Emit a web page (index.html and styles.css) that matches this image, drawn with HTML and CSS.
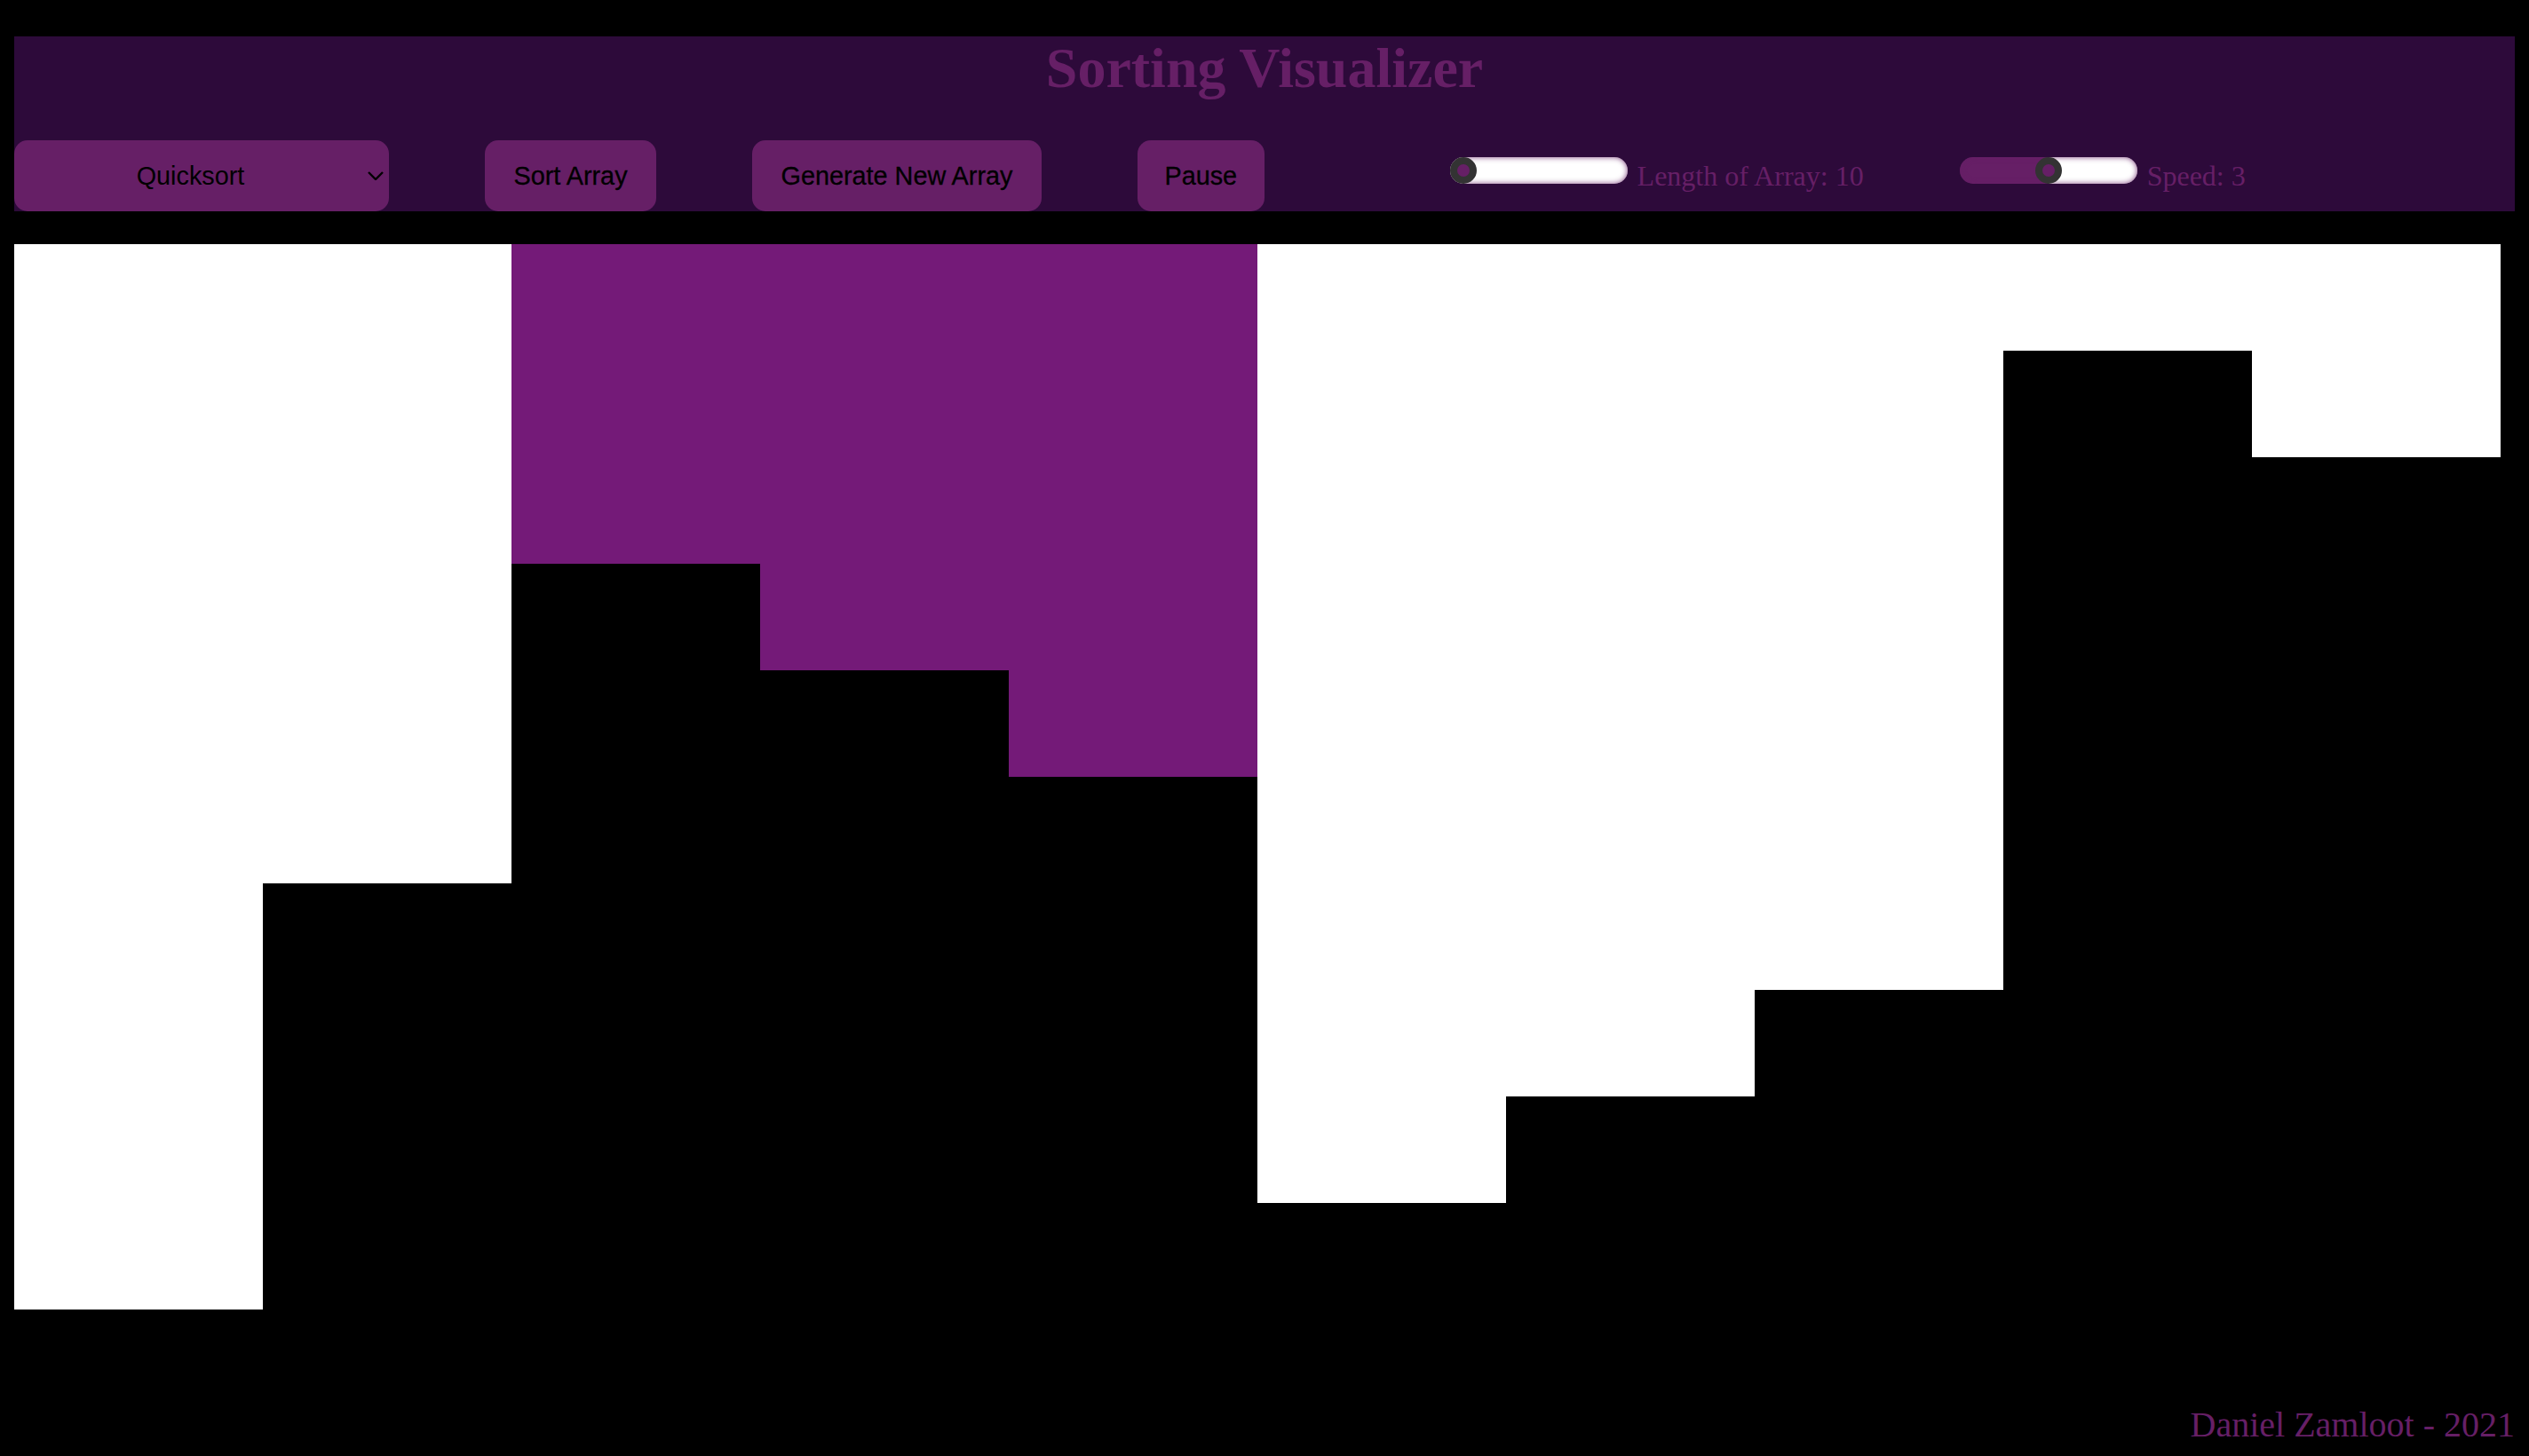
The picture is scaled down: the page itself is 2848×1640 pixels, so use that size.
FILE: index.html
```html
<!DOCTYPE html>
<html lang="en">
<head>
<meta charset="utf-8">
<title>Sorting Visualizer</title>
<link rel="stylesheet" href="styles.css">
</head>
<body>
<div class="app">
  <header class="header">
    <h1 class="title">Sorting Visualizer</h1>
    <div class="controls">
      <div class="select-wrap">
        <select class="algo-select">
          <option>Quicksort</option>
          <option>Merge Sort</option>
          <option>Bubble Sort</option>
        </select>
        <svg class="chevron" width="18" height="10" viewBox="0 0 18 10"><polyline points="1,1 9,9 17,1" fill="none" stroke="#000" stroke-width="2.4"/></svg>
      </div>
      <button class="btn">Sort Array</button>
      <button class="btn">Generate New Array</button>
      <button class="btn btn-pause">Pause</button>
      <div class="slider-group first">
        <input class="slider" type="range" min="10" max="100" value="10" style="--fill:0%">
        <span class="slider-label">Length of Array: 10</span>
      </div>
      <div class="slider-group">
        <input class="slider" type="range" min="1" max="5" value="3" style="--fill:50%">
        <span class="slider-label">Speed: 3</span>
      </div>
    </div>
  </header>
  <div class="bars">
    <div class="bar white" style="height:1200px"></div>
    <div class="bar white" style="height:720px"></div>
    <div class="bar active" style="height:360px"></div>
    <div class="bar active" style="height:480px"></div>
    <div class="bar active" style="height:600px"></div>
    <div class="bar white" style="height:1080px"></div>
    <div class="bar white" style="height:960px"></div>
    <div class="bar white" style="height:840px"></div>
    <div class="bar white" style="height:120px"></div>
    <div class="bar white" style="height:240px"></div>
  </div>
  <footer class="footer">Daniel Zamloot - 2021</footer>
</div>
</body>
</html>
```
FILE: styles.css
```css
html, body {
  margin: 0;
  padding: 0;
  background: #000;
}
body {
  font-family: "Liberation Serif", "Times New Roman", serif;
}
.app {
  padding: 41px 16px 0 16px;
}
.header {
  background: #2d0a3a;
  height: 197px;
  display: flex;
  flex-direction: column;
}
.title {
  margin: 0;
  font-family: "Liberation Serif", "Times New Roman", serif;
  font-weight: bold;
  font-size: 64px;
  line-height: 72px;
  color: #661f66;
  text-align: center;
}
.controls {
  margin-top: 45px;
  height: 80px;
  display: flex;
  align-items: center;
  gap: 108px;
}
.select-wrap {
  position: relative;
  width: 422px;
  height: 80px;
}
.algo-select {
  -webkit-appearance: none;
  appearance: none;
  width: 100%;
  height: 100%;
  margin: 0;
  border: none;
  border-radius: 15px;
  background: #661f66;
  color: #000;
  font-family: "Liberation Sans", Arial, sans-serif;
  font-size: 28.8px;
  padding: 0 25px 0 0;
  text-align: center;
  text-align-last: center;
  outline: none;
}
.chevron {
  position: absolute;
  right: 6px;
  top: 35px;
  pointer-events: none;
}
.btn {
  height: 80px;
  margin: 0;
  padding: 0 32.5px;
  border: none;
  border-radius: 15px;
  background: #661f66;
  color: #000;
  font-family: "Liberation Sans", Arial, sans-serif;
  font-size: 28.8px;
  -webkit-text-stroke: 0.3px #000;
}
.btn-pause {
  padding: 0 30.5px;
}
.slider-group {
  display: flex;
  align-items: center;
  gap: 11px;
}
.slider-group.first {
  margin-left: 101px;
}
.slider {
  -webkit-appearance: none;
  appearance: none;
  width: 200px;
  height: 30px;
  margin: 0 0 12px 0;
  border-radius: 15px;
  background: linear-gradient(to right, #661f66 var(--fill), #fff var(--fill));
  box-shadow: inset 0 0 6px rgba(102, 31, 102, 0.85);
  outline: none;
}
.slider::-webkit-slider-thumb {
  -webkit-appearance: none;
  appearance: none;
  width: 30px;
  height: 30px;
  box-sizing: border-box;
  border-radius: 50%;
  background: #661f66;
  border: 8px solid #333;
}
.slider-label {
  font-size: 32px;
  color: #661f66;
}
.bars {
  margin-top: 37px;
  display: flex;
  align-items: flex-start;
  height: 1200px;
}
.bar {
  width: 280px;
  flex: none;
}
.bar.white {
  background: #fff;
}
.bar.active {
  background: #741a78;
}
.footer {
  margin-top: 107px;
  text-align: right;
  font-size: 40px;
  line-height: 46px;
  color: #661f66;
}
```
